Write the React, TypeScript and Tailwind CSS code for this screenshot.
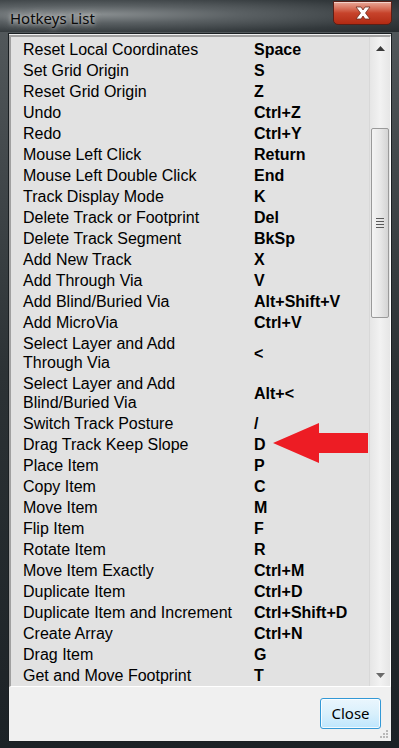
import React from "react";

interface Hotkey {
  label: string[];
  key: string;
}

const hotkeys: Hotkey[] = [
  { label: ["Reset Local Coordinates"], key: "Space" },
  { label: ["Set Grid Origin"], key: "S" },
  { label: ["Reset Grid Origin"], key: "Z" },
  { label: ["Undo"], key: "Ctrl+Z" },
  { label: ["Redo"], key: "Ctrl+Y" },
  { label: ["Mouse Left Click"], key: "Return" },
  { label: ["Mouse Left Double Click"], key: "End" },
  { label: ["Track Display Mode"], key: "K" },
  { label: ["Delete Track or Footprint"], key: "Del" },
  { label: ["Delete Track Segment"], key: "BkSp" },
  { label: ["Add New Track"], key: "X" },
  { label: ["Add Through Via"], key: "V" },
  { label: ["Add Blind/Buried Via"], key: "Alt+Shift+V" },
  { label: ["Add MicroVia"], key: "Ctrl+V" },
  { label: ["Select Layer and Add", "Through Via"], key: "<" },
  { label: ["Select Layer and Add", "Blind/Buried Via"], key: "Alt+<" },
  { label: ["Switch Track Posture"], key: "/" },
  { label: ["Drag Track Keep Slope"], key: "D" },
  { label: ["Place Item"], key: "P" },
  { label: ["Copy Item"], key: "C" },
  { label: ["Move Item"], key: "M" },
  { label: ["Flip Item"], key: "F" },
  { label: ["Rotate Item"], key: "R" },
  { label: ["Move Item Exactly"], key: "Ctrl+M" },
  { label: ["Duplicate Item"], key: "Ctrl+D" },
  { label: ["Duplicate Item and Increment"], key: "Ctrl+Shift+D" },
  { label: ["Create Array"], key: "Ctrl+N" },
  { label: ["Drag Item"], key: "G" },
  { label: ["Get and Move Footprint"], key: "T" },
];

export default function App() {
  return (
    <div className="relative w-[399px] h-[748px] overflow-hidden flex flex-col bg-gradient-to-b from-[#555b5e] via-[#2c3235] to-[#1c2226] font-['Liberation_Sans',Arial,sans-serif]">
      {/* title bar */}
      <div className="h-[32px] flex items-start justify-between shrink-0 bg-[radial-gradient(ellipse_at_22%_45%,#8a8f91_0%,#5a6063_35%,#33393c_75%,#262b2e_100%)]">
        <span className="ml-[10px] mt-[8px] text-[15px] leading-[20px] text-[#0a0a0a] font-['Noto_Sans',sans-serif] [text-shadow:0_0_4px_rgba(230,230,230,0.9),0_0_10px_rgba(200,200,200,0.8)]">
          Hotkeys List
        </span>
        <button className="mr-[7px] mt-[1px] w-[59px] h-[24px] rounded-b-[5px] border border-[#5a1f16] bg-gradient-to-b from-[#e8a898] via-[#c7432b] to-[#b22a12] shadow-[inset_0_1px_0_rgba(255,255,255,0.5)] flex items-center justify-center">
          <svg width="20" height="14" viewBox="0 0 20 14">
            <path
              d="M3 1 L8 1 L10 4 L12 1 L17 1 L12.5 7 L17 13 L12 13 L10 10 L8 13 L3 13 L7.5 7 Z"
              fill="#ffffff"
              stroke="#6b2a1c"
              strokeWidth="0.8"
            />
          </svg>
        </button>
      </div>

      {/* client area */}
      <div className="ml-[8px] w-[384px] h-[709px] mt-[1px] border border-[#1a1f22] bg-[#f0f0f0] flex flex-col">
        {/* list box */}
        <div className="relative h-[652px] mt-[1px] flex border-t-2 border-l-2 border-t-[#a0a0a0] border-l-[#a0a0a0] border-b border-r border-b-white border-r-white">
          <div className="flex-1 overflow-hidden bg-[#e2e2e2] pt-[2px]">
            <div className="grid grid-cols-[231px_1fr] pl-[12px] text-[16px] leading-[19px] text-black">
              {hotkeys.map((h) => (
                <React.Fragment key={h.label.join(" ")}>
                  <div className="py-[1px]">
                    {h.label.map((l) => (
                      <div key={l}>{l}</div>
                    ))}
                  </div>
                  <div className="py-[1px] font-bold flex items-center">{h.key}</div>
                </React.Fragment>
              ))}
            </div>
          </div>

          {/* scrollbar */}
          <div className="w-[21px] shrink-0 flex flex-col bg-gradient-to-r from-[#e6e6e6] via-[#f2f2f2] to-[#e6e6e6] border-l border-[#d8d8d8]">
            <div className="h-[22px] flex items-center justify-center">
              <svg width="9" height="5" viewBox="0 0 9 5">
                <path d="M4.5 0 L9 5 L0 5 Z" fill="#3a3a3a" />
              </svg>
            </div>
            <div className="h-[69px]" />
            <div className="h-[190px] mx-[1px] rounded-[2px] border border-[#9a9a9a] bg-gradient-to-r from-[#f4f4f4] via-[#e8e8e8] to-[#d4d4d4] flex flex-col items-center justify-center gap-[2px]">
              <div className="w-[8px] h-[1px] bg-[#5a5a5a]" />
              <div className="w-[8px] h-[1px] bg-[#5a5a5a]" />
              <div className="w-[8px] h-[1px] bg-[#5a5a5a]" />
              <div className="w-[8px] h-[1px] bg-[#5a5a5a]" />
            </div>
            <div className="flex-1" />
            <div className="h-[22px] flex items-center justify-center">
              <svg width="9" height="5" viewBox="0 0 9 5">
                <path d="M0 0 L9 0 L4.5 5 Z" fill="#6a6a6a" />
              </svg>
            </div>
          </div>

          {/* red arrow */}
          <svg
            className="absolute left-[262px] top-[386px]"
            width="96"
            height="42"
            viewBox="0 0 96 42"
          >
            <path d="M0 20 L46 0 L46 10 L95 10 L95 30 L46 30 L46 40 Z" fill="#ed1c24" />
          </svg>
        </div>

        {/* bottom buttons */}
        <div className="flex-1 flex justify-end items-start pt-[11px] pr-[10px] relative">
          <button className="w-[61px] h-[31px] rounded-[3px] border border-[#3399d6] bg-gradient-to-b from-[#eaf6fd] via-[#d9f0fc] to-[#bee6fd] shadow-[inset_0_0_0_1px_rgba(255,255,255,0.8)] text-[15px] text-black font-['Noto_Sans',sans-serif]">
            Close
          </button>
          <svg className="absolute right-[2px] bottom-[2px]" width="10" height="10" viewBox="0 0 10 10">
            <rect x="7" y="1" width="2" height="2" fill="#b8b8b8" />
            <rect x="4" y="4" width="2" height="2" fill="#b8b8b8" />
            <rect x="7" y="4" width="2" height="2" fill="#b8b8b8" />
            <rect x="1" y="7" width="2" height="2" fill="#b8b8b8" />
            <rect x="4" y="7" width="2" height="2" fill="#b8b8b8" />
            <rect x="7" y="7" width="2" height="2" fill="#b8b8b8" />
          </svg>
        </div>
      </div>
    </div>
  );
}
